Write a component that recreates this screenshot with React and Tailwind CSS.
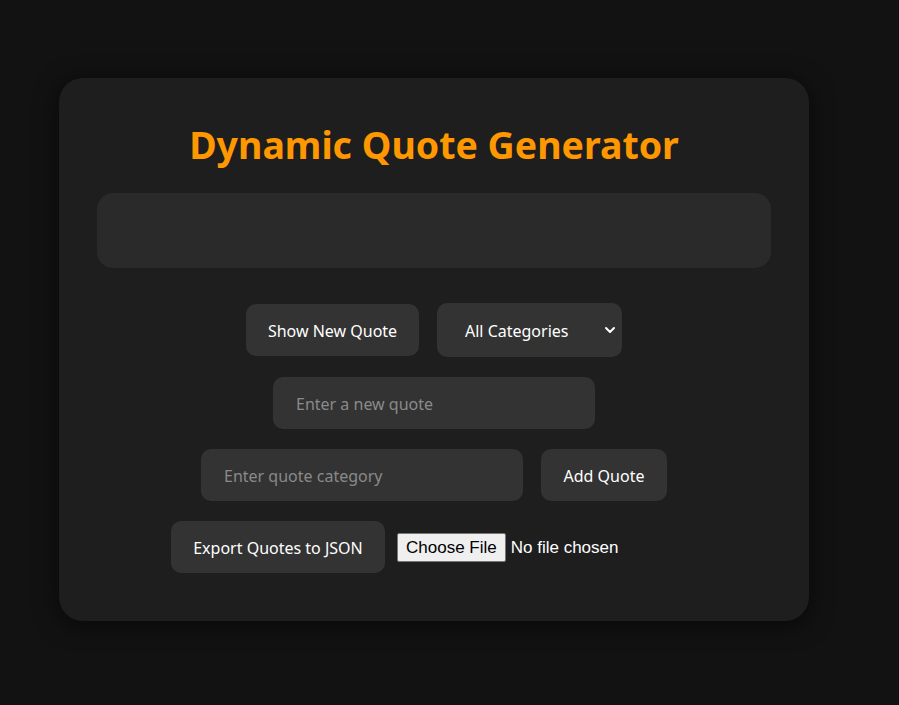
import { ChevronDown } from "lucide-react";

export default function App() {
  return (
    <div className="min-h-[705px] bg-[#121212] pt-[78px] font-['Noto_Sans',sans-serif] text-[#f2f2f2]">
      <div className="ml-[59px] w-[750px] rounded-[24px] bg-[#1e1e1e] px-[38px] pt-[38px] pb-[48px] shadow-[0_4px_24px_rgba(0,0,0,0.6)]">
        <h1 className="flex h-[56px] items-center justify-center pt-[2px] text-[37.5px] font-bold text-[#ff9800]">
          Dynamic Quote Generator
        </h1>

        <div className="mt-[21px] h-[75px] rounded-[16px] bg-[#2a2a2a]" />

        <div className="mt-[35px] flex flex-col items-center gap-[20px]">
          <div className="flex items-center gap-[18px]">
            <button className="h-[52px] w-[173px] rounded-[10px] bg-[#333] pt-[1px] text-[16px] text-white">
              Show New Quote
            </button>
            <div className="relative">
              <select className="h-[54px] w-[185px] appearance-none rounded-[10px] bg-[#333] pt-[1px] pl-[28px] text-[16px] text-white outline-none">
                <option>All Categories</option>
              </select>
              <ChevronDown
                size={16}
                strokeWidth={3}
                className="pointer-events-none absolute right-[4px] top-[19px] text-white"
              />
            </div>
          </div>

          <input
            type="text"
            placeholder="Enter a new quote"
            className="h-[52px] w-[322px] rounded-[10px] bg-[#333] px-[23px] pt-[1px] text-[16px] text-white outline-none placeholder:text-[#8a8a8a]"
          />

          <div className="flex items-center gap-[18px]">
            <input
              type="text"
              placeholder="Enter quote category"
              className="h-[52px] w-[322px] rounded-[10px] bg-[#333] px-[23px] pt-[1px] text-[16px] text-white outline-none placeholder:text-[#8a8a8a]"
            />
            <button className="h-[52px] w-[126px] rounded-[10px] bg-[#333] pt-[1px] text-[16px] text-white">
              Add Quote
            </button>
          </div>

          <div className="flex items-center gap-[12px]">
            <button className="h-[52px] w-[214px] rounded-[10px] bg-[#333] pt-[1px] text-[16px] text-white">
              Export Quotes to JSON
            </button>
            <input
              type="file"
              className="w-[300px] pt-[1px] font-['Liberation_Sans',Arial,sans-serif] text-[17px] text-white file:mr-[5px] file:rounded-[2px] file:border file:border-[#767676] file:bg-[#efefef] file:px-[8px] file:py-[1px] file:text-black"
            />
          </div>
        </div>
      </div>
    </div>
  );
}
